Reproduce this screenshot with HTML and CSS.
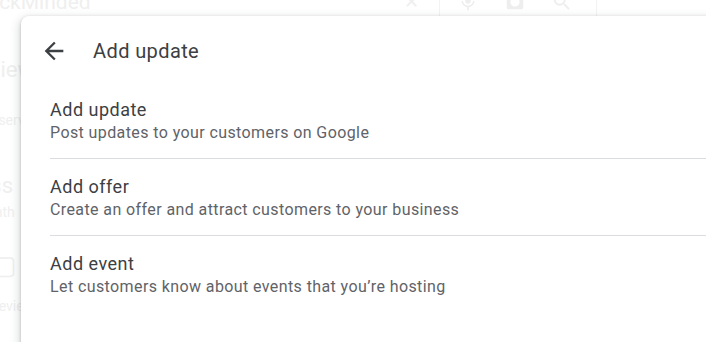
FILE: index.html
```html
<!DOCTYPE html>
<html lang="en">
<head>
    <meta charset="UTF-8">
    <meta name="viewport" content="width=device-width, initial-scale=1.0">
    <title>Add update</title>
    <link rel="stylesheet" href="styles.css">
</head>
<body>

    <!-- pagina de fondo, casi invisible detras del panel -->
    <div class="page">
        <div class="topbar">
            <span class="brand">QuickMinded</span>
            <div class="search-tools">
                <span class="tool">&#10005;</span>
                <span class="tool-sep"></span>
                <svg class="tool" viewBox="0 0 24 24"><path d="M12 14c1.66 0 3-1.34 3-3V5c0-1.660-1.34-3-3-3S9 3.34 9 5v6c0 1.66 1.34 3 3 3zm5.3-3c0 3-2.54 5.1-5.3 5.1S6.7 14 6.7 11H5c0 3.41 2.72 6.230 6 6.72V21h2v-3.28c3.28-.48 6-3.3 6-6.72h-1.7z"/></svg>
                <svg class="tool wide" viewBox="0 0 24 24"><path d="M19 4h-3.2L14 2h-4L8.2 4H5c-1.1 0-2 .9-2 2v12c0 1.1.9 2 2 2h14c1.1 0 2-.9 2-2V6c0-1.1-.9-2-2-2zm-7 13c-2.76 0-5-2.24-5-5s2.24-5 5-5 5 2.24 5 5-2.24 5-5 5z"/></svg>
                <svg class="tool wide" viewBox="0 0 24 24"><path d="M15.5 14h-.79l-.28-.27A6.47 6.47 0 0 0 16 9.5 6.5 6.5 0 1 0 9.5 16c1.61 0 3.09-.59 4.23-1.57l.27.28v.79l5 4.99L20.49 19l-4.99-5zm-6 0C7.01 14 5 11.99 5 9.5S7.01 5 9.5 5 14 7.01 14 9.5 11.99 14 9.5 14z"/></svg>
                <span class="tool-sep wide"></span>
            </div>
        </div>
        <div class="side">
            <div class="side-row big">&#9634; Views</div>
            <div class="side-row">Add services</div>
            <div class="side-row big">Business</div>
            <div class="side-row">Per month</div>
            <div class="side-row box">&#9634;</div>
            <div class="side-row">Reviews</div>
        </div>
    </div>

    <!-- panel "Add update" -->
    <div class="sheet">
        <div class="sheet-header">
            <svg class="back" viewBox="0 0 24 24"><path d="M20 11H7.83l5.59-5.59L12 4l-8 8 8 8 1.41-1.41L7.83 13H20v-2z"/></svg>
            <h1 class="sheet-title">Add update</h1>
        </div>
        <ul class="options">
            <li class="option">
                <div class="option-title">Add update</div>
                <div class="option-desc">Post updates to your customers on Google</div>
            </li>
            <li class="option">
                <div class="option-title">Add offer</div>
                <div class="option-desc">Create an offer and attract customers to your business</div>
            </li>
            <li class="option">
                <div class="option-title">Add event</div>
                <div class="option-desc">Let customers know about events that you’re hosting</div>
            </li>
        </ul>
    </div>

</body>
</html>
```

FILE: styles.css
```css
* {
    margin: 0;
    padding: 0;
    box-sizing: border-box;
}

body {
    font-family: Roboto, "Liberation Sans", sans-serif;
    background-color: white;
    height: 100vh;
    overflow: hidden;
    position: relative;
}

/* Fondo */
.page {
    color: #efefef;
}

.topbar {
    display: flex;
    align-items: center;
    height: 16px;
    margin-top: -6px;
    padding-right: 109px;
}

.brand {
    font-size: 21px;
    margin-left: -32px;
}

.search-tools {
    margin-left: auto;
    display: flex;
    align-items: center;
    gap: 17px;
}

.tool {
    width: 22px;
    height: 22px;
    fill: #eeeeee;
    font-size: 18px;
    text-align: center;
}

.tool.wide {
    margin-left: 8px;
}

.tool-sep {
    width: 1px;
    height: 28px;
    background: #f3f3f3;
}

.tool-sep.wide {
    margin-left: 6px;
}

.side {
    display: flex;
    flex-direction: column;
    margin-left: -40px;
    padding-top: 46px;
    width: 100px;
}

.side-row {
    font-size: 14px;
    line-height: 20px;
    white-space: nowrap;
}

.side-row.big {
    font-size: 22px;
    line-height: 28px;
}

.side-row:nth-child(2) {
    margin-top: 26px;
    padding-left: 10px;
}

.side-row:nth-child(3) {
    margin-top: 42px;
    margin-left: -36px;
}

.side-row:nth-child(4) {
    margin-top: 2px;
    margin-left: -10px;
}

.side-row.box {
    font-size: 26px;
    line-height: 30px;
    margin-top: 28px;
    margin-left: 32px;
}

.side-row:nth-child(6) {
    margin-top: 16px;
    margin-left: 30px;
}

/* Panel */
.sheet {
    position: absolute;
    top: 16px;
    left: 21px;
    right: -20px;
    bottom: -20px;
    background: white;
    border-radius: 8px 0 0 0;
    box-shadow: 0 1px 3px rgba(60, 64, 67, 0.3), 0 4px 8px 3px rgba(60, 64, 67, 0.15);
}

.sheet-header {
    display: flex;
    align-items: center;
    padding: 21px 0 17px 19px;
}

.back {
    width: 28px;
    height: 28px;
    fill: #3c4043;
    flex-shrink: 0;
}

.sheet-title {
    font-size: 20px;
    font-weight: 400;
    line-height: 28px;
    letter-spacing: 0.4px;
    color: #3c4043;
    margin-left: 25px;
}

.options {
    list-style: none;
    padding-left: 29px;
}

.option {
    padding: 17px 0 17px;
    border-bottom: 1px solid #dadce0;
}

.option:last-child {
    border-bottom: none;
}

.option-title {
    font-size: 18px;
    line-height: 22px;
    letter-spacing: 0.5px;
    color: #3c4043;
}

.option-desc {
    font-size: 16px;
    line-height: 17px;
    letter-spacing: 0.4px;
    color: #5f6368;
    margin-top: 3px;
}
```
